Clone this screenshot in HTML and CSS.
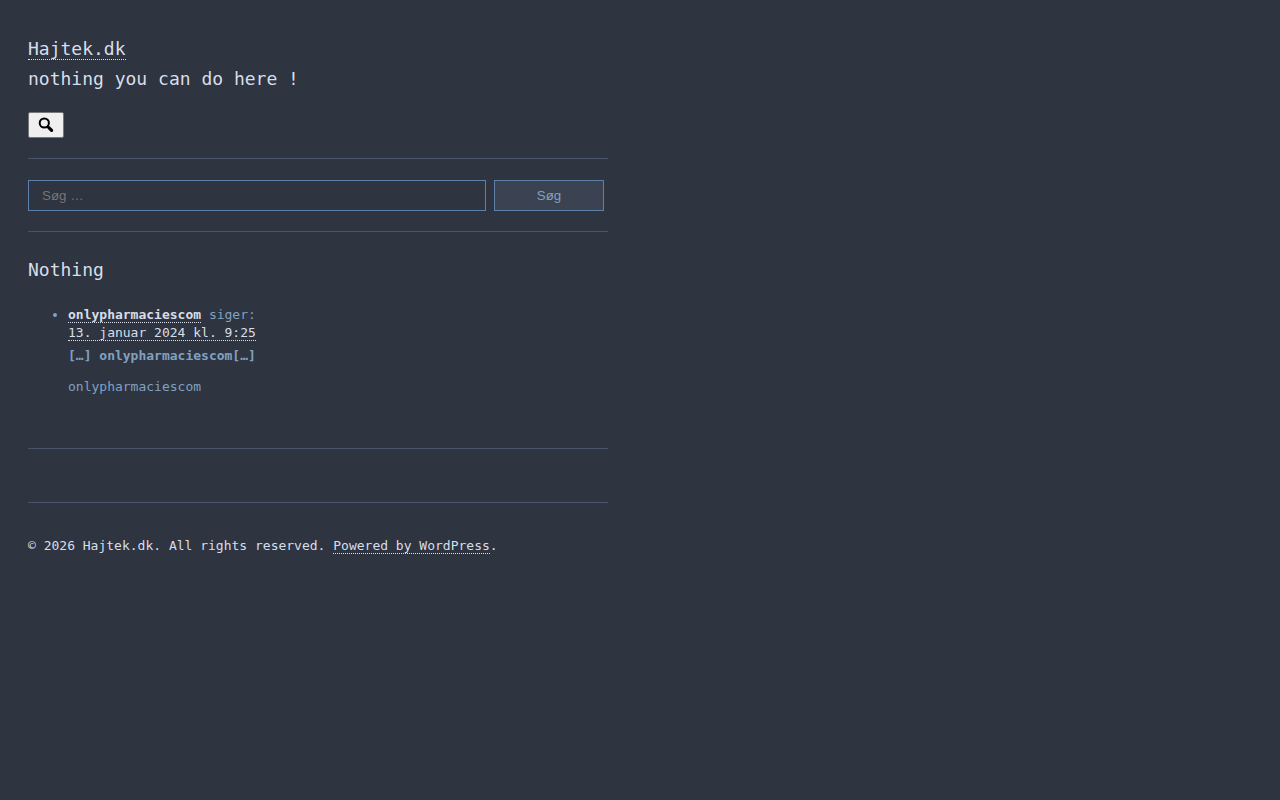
FILE: index.html
```
<!DOCTYPE html>
<html lang="da">
<head>
    <meta charset="UTF-8">
    <meta name="viewport" content="width=device-width, initial-scale=1">
    <title>Hajtek.dk</title>
    <link rel="stylesheet" href="styles.css">
</head>
<body>
    <header class="site-header">
        <h1 class="site-title"><a href="/">Hajtek.dk</a></h1>
        <p class="site-description">nothing you can do here !</p>
        <button type="button" class="search-toggle" aria-label="Søg">
            <svg width="16" height="16" viewBox="0 0 16 16" aria-hidden="true">
                <circle cx="6.3" cy="6" r="4.6" fill="none" stroke="#000" stroke-width="2"/>
                <path d="M9 8.8l2 2" stroke="#000" stroke-width="2.2"/>
                <path d="M10.8 10.6l2.8 2.8" stroke="#000" stroke-width="3.2" stroke-linecap="round"/>
            </svg>
        </button>
    </header>
    <hr>
    <form class="search-form" role="search">
        <input type="search" class="search-field" placeholder="Søg …" aria-label="Søg efter">
        <button type="submit" class="search-submit">Søg</button>
    </form>
    <hr>
    <main>
        <h2 class="page-title">Nothing</h2>
        <ul class="comments">
            <li>
                <div><b><a href="#author">onlypharmaciescom</a></b> siger:</div>
                <div><a href="#comment">13. januar 2024 kl. 9:25</a></div>
                <p class="comment-title"><strong>[…] onlypharmaciescom[…]</strong></p>
                <p class="comment-text">onlypharmaciescom</p>
            </li>
        </ul>
    </main>
    <hr>
    <hr class="footer-line">
    <footer class="site-footer">© 2026 Hajtek.dk. All rights reserved. <a href="#wordpress">Powered by WordPress</a>.</footer>
</body>
</html>
```

FILE: styles.css
```
* {
    box-sizing: border-box;
}
body {
    max-width: 620px;
    margin: 0;
    padding: 34px 12px 20px 28px;
    background-color: #2e3440;
    color: #81a1c1;
    font-family: "DejaVu Sans Mono", monospace;
    font-size: 13px;
    line-height: 18px;
}
a {
    color: #d8dee9;
    text-decoration: none;
    border-bottom: 1px dotted #d8dee9;
}
hr {
    height: 1px;
    margin: 0;
    border: 0;
    border-radius: 1px;
    background-color: #4c566a;
}
.site-title,
.site-description,
.page-title {
    margin: 0;
    color: #d8dee9;
    font-size: 18px;
    font-weight: normal;
    line-height: 30px;
}
.search-toggle {
    display: flex;
    align-items: center;
    justify-content: center;
    width: 36px;
    height: 26px;
    margin: 18px 0 20px;
    padding: 0;
    background-color: #efefef;
    border: 1px solid #767676;
    border-radius: 2px;
    cursor: pointer;
}
.search-form {
    display: flex;
    gap: 8px;
    margin: 21px 4px 20px 0;
}
.search-field,
.search-submit {
    height: 31px;
    border: 1px solid #5e81ac;
    border-radius: 0;
    color: #81a1c1;
    font-family: "Liberation Sans", Arial, sans-serif;
}
.search-field {
    flex: 1;
    min-width: 0;
    padding: 0 13px;
    background-color: #2e3440;
    appearance: none;
}
.search-field::placeholder {
    color: #757575;
}
.search-submit {
    width: 110px;
    background-color: #3b4252;
    cursor: pointer;
}
.page-title {
    margin: 23px 0 21px;
}
.comments {
    margin: 0 0 52px;
    padding-left: 40px;
}
.comments p {
    margin: 0;
}
.comments .comment-title {
    margin: 5px 0 13px;
}
.footer-line {
    margin-top: 53px;
}
.site-footer {
    margin-top: 34px;
    color: #d8dee9;
}
```
